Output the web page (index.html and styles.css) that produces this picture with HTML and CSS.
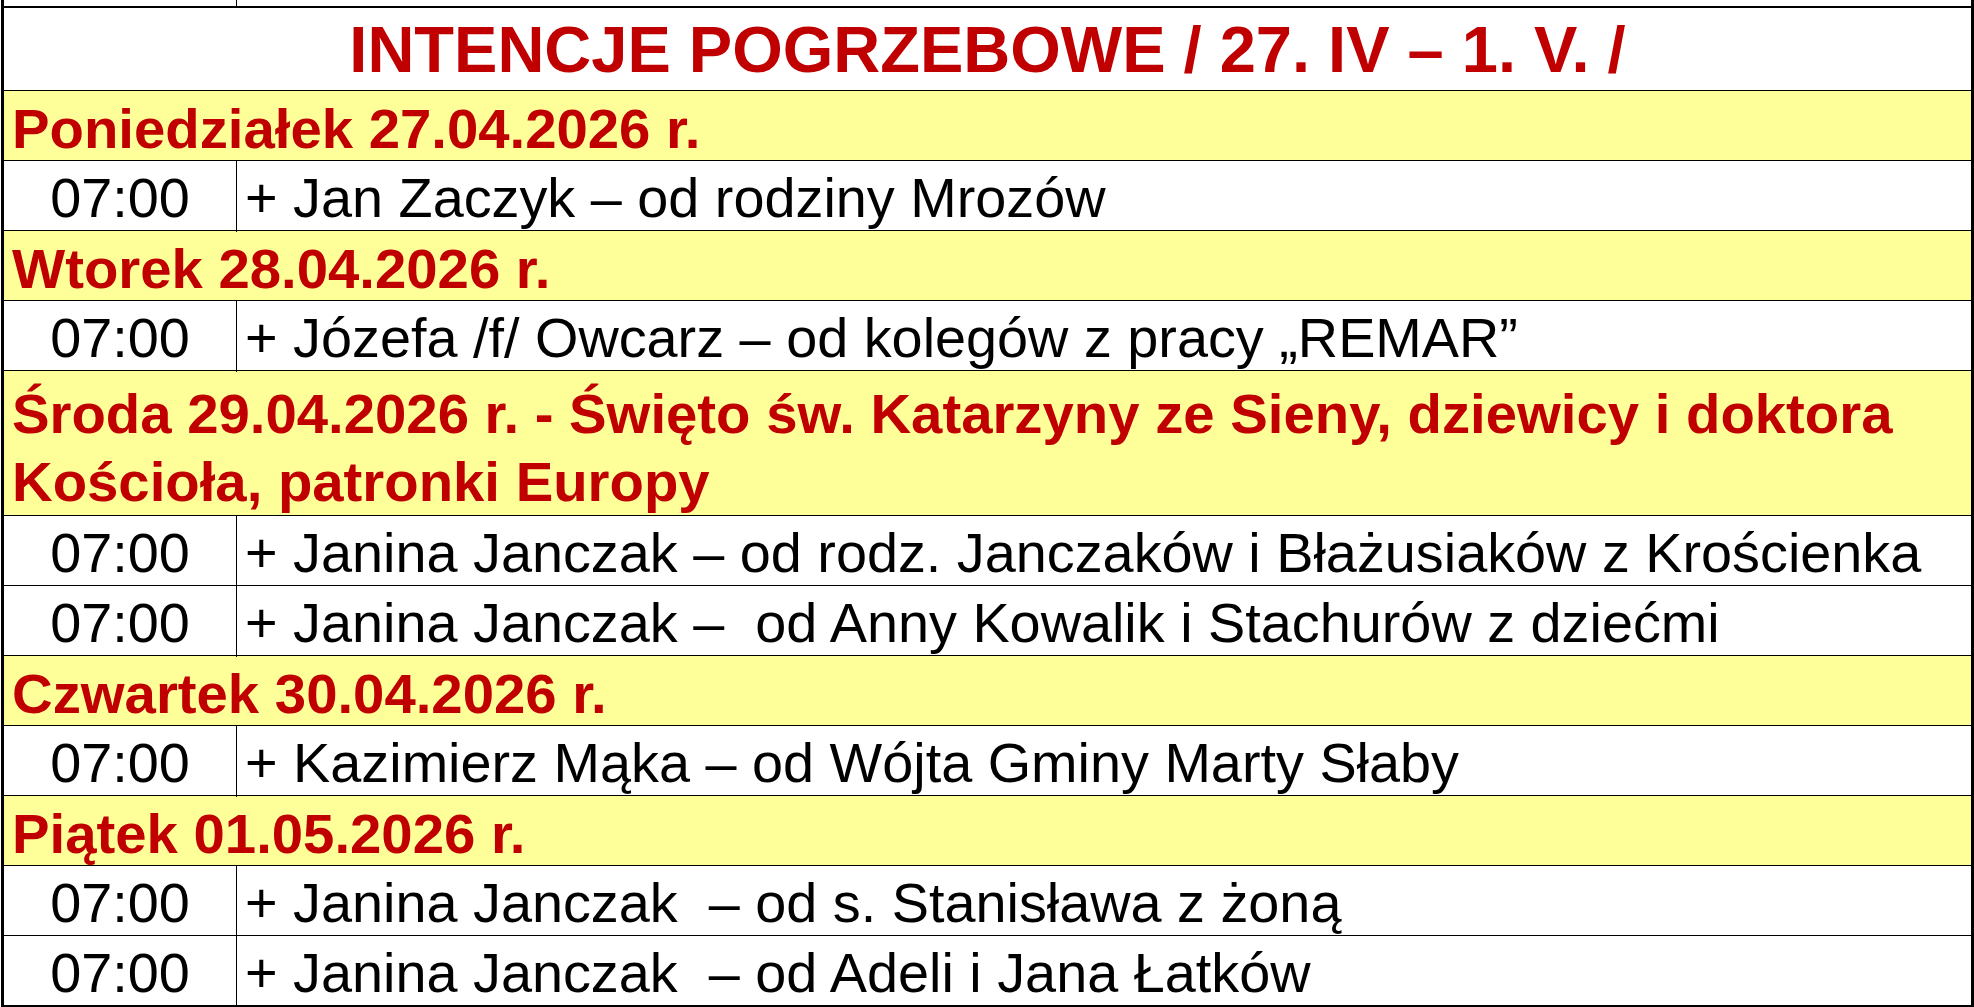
FILE: index.html
```html
<!DOCTYPE html>
<html lang="pl">
<head>
<meta charset="utf-8">
<title>Intencje pogrzebowe</title>
<link rel="stylesheet" href="styles.css">
</head>
<body>
<div class="sheet">
  <div class="row row-top">
    <div class="time"></div>
    <div class="text"></div>
  </div>
  <div class="title">INTENCJE POGRZEBOWE / 27. IV – 1. V. /</div>

  <div class="day">Poniedziałek 27.04.2026 r.</div>
  <div class="row"><div class="time">07:00</div><div class="text">+ Jan Zaczyk – od rodziny Mrozów</div></div>

  <div class="day">Wtorek 28.04.2026 r.</div>
  <div class="row"><div class="time">07:00</div><div class="text">+ Józefa /f/ Owcarz – od kolegów z pracy „REMAR”</div></div>

  <div class="day day-two">Środa 29.04.2026 r. - Święto św. Katarzyny ze Sieny, dziewicy i doktora<br>Kościoła, patronki Europy</div>
  <div class="row"><div class="time">07:00</div><div class="text">+ Janina Janczak – od rodz. Janczaków i Błażusiaków z Krościenka</div></div>
  <div class="row"><div class="time">07:00</div><div class="text">+ Janina Janczak –  od Anny Kowalik i Stachurów z dziećmi</div></div>

  <div class="day">Czwartek 30.04.2026 r.</div>
  <div class="row"><div class="time">07:00</div><div class="text">+ Kazimierz Mąka – od Wójta Gminy Marty Słaby</div></div>

  <div class="day">Piątek 01.05.2026 r.</div>
  <div class="row"><div class="time">07:00</div><div class="text">+ Janina Janczak  – od s. Stanisława z żoną</div></div>
  <div class="row row-last"><div class="time">07:00</div><div class="text">+ Janina Janczak  – od Adeli i Jana Łatków</div></div>
</div>
</body>
</html>
```

FILE: styles.css
```css
html, body {
  margin: 0;
  padding: 0;
  background: #ffffff;
}

body {
  font-family: "Liberation Sans", Arial, sans-serif;
  color: #000000;
  overflow: hidden;
}

.sheet {
  box-sizing: border-box;
  width: 1973px;
  margin-left: 1px;
  border-left: 3px solid #000;
  border-right: 3px solid #000;
  border-bottom: 2px solid #000;
}

.row {
  display: grid;
  grid-template-columns: 232px 1fr;
  height: 69px;
  border-bottom: 1px solid #000;
  background: #ffffff;
}

.row-last {
  border-bottom: none;
}

.row-top {
  height: 6px;
  border-bottom: 2px solid #000;
}

.time {
  font-size: 55.8px;
  line-height: 69px;
  padding-top: 2px;
  text-align: center;
  white-space: nowrap;
}

.text {
  border-left: 1px solid #000;
  padding-left: 8px;
  padding-top: 2px;
  font-size: 55.8px;
  line-height: 69px;
  white-space: pre;
}

.row-top .time,
.row-top .text {
  padding-top: 0;
  line-height: 6px;
}

.title {
  box-sizing: border-box;
  height: 83px;
  border-bottom: 1px solid #000;
  padding-top: 2px;
  font-size: 65px;
  line-height: 80px;
  font-weight: bold;
  color: #c00000;
  text-align: center;
  white-space: nowrap;
}

.day {
  box-sizing: border-box;
  height: 70px;
  border-bottom: 1px solid #000;
  background: #ffff99;
  color: #c00000;
  font-weight: bold;
  font-size: 56.3px;
  line-height: 69px;
  padding-left: 8px;
  padding-top: 3px;
  white-space: nowrap;
}

.day-two {
  height: 145px;
  padding-top: 9px;
  line-height: 68px;
}
```
